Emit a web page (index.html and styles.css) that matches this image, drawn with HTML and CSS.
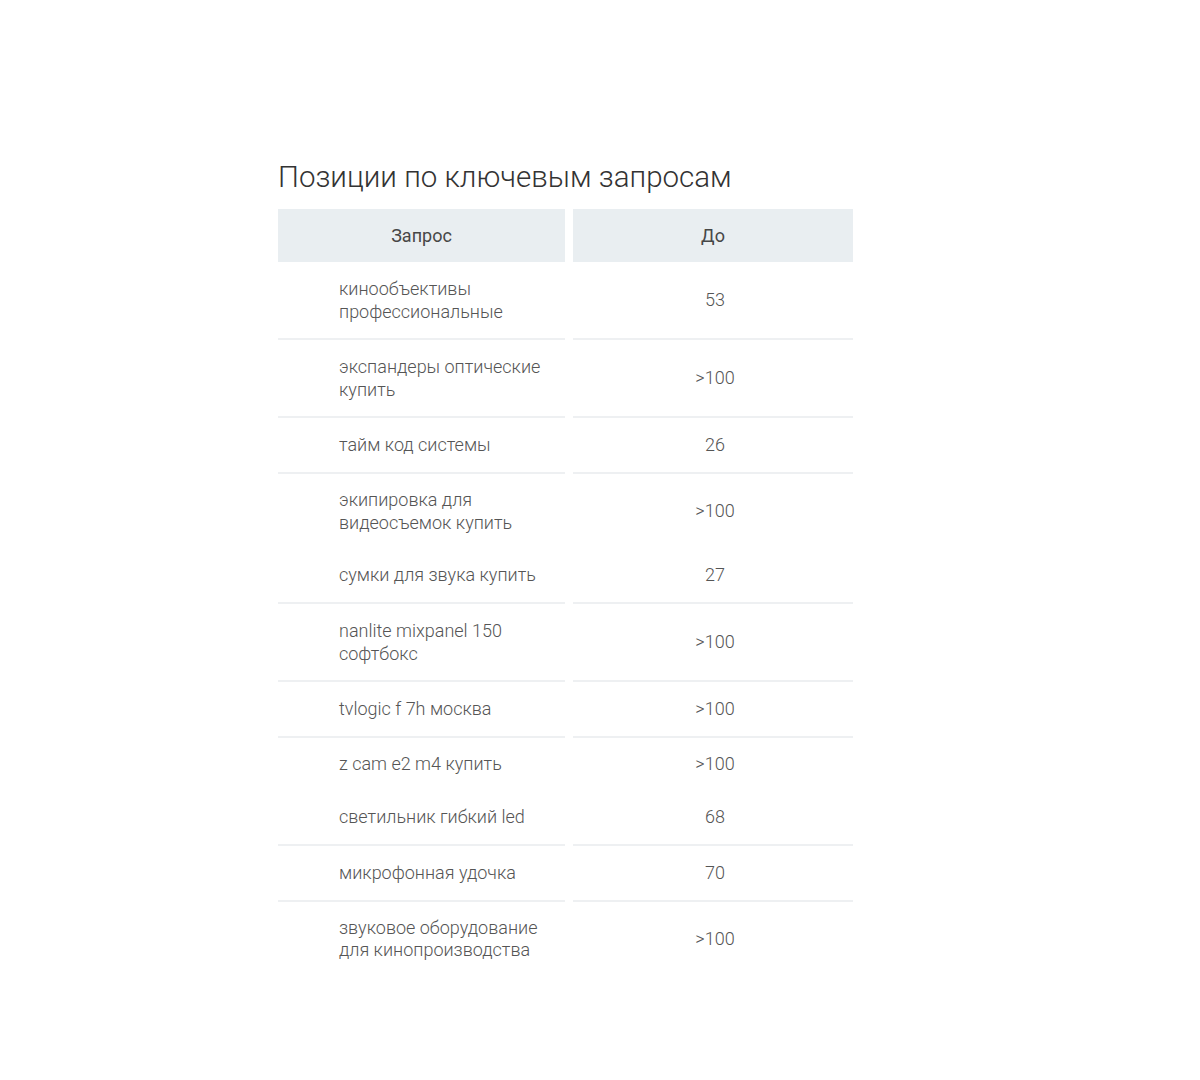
FILE: index.html
```html
<!DOCTYPE html>
<html lang="ru">
<head>
<meta charset="utf-8">
<link rel="stylesheet" href="styles.css">
</head>
<body>
<section class="positions">
  <h2 class="title">Позиции по ключевым запросам</h2>
  <div class="table">
    <div class="th">Запрос</div><div class="th">До</div>

    <div class="q b">кинообъективы<br>профессиональные</div><div class="v b">53</div>
    <div class="q b">экспандеры оптические<br>купить</div><div class="v b">&gt;100</div>
    <div class="q b">тайм код системы</div><div class="v b">26</div>
    <div class="q nb">экипировка для<br>видеосъемок купить</div><div class="v nb">&gt;100</div>
    <div class="q b">сумки для звука купить</div><div class="v b">27</div>
    <div class="q b">nanlite mixpanel 150<br>софтбокс</div><div class="v b">&gt;100</div>
    <div class="q b">tvlogic f 7h москва</div><div class="v b">&gt;100</div>
    <div class="q nb">z cam e2 m4 купить</div><div class="v nb">&gt;100</div>
    <div class="q b">светильник гибкий led</div><div class="v b">68</div>
    <div class="q b">микрофонная удочка</div><div class="v b">70</div>
    <div class="q nb">звуковое оборудование<br>для кинопроизводства</div><div class="v nb">&gt;100</div>
  </div>
</section>
</body>
</html>
```

FILE: styles.css
```css
html, body {
  margin: 0;
  padding: 0;
  background: #ffffff;
}

body {
  font-family: Roboto, "Liberation Sans", Arial, sans-serif;
}

.positions {
  padding: 159px 0 0 278px;
  width: 575px;
}

.title {
  margin: 0 0 14px 0;
  font-size: 29.5px;
  font-weight: 300;
  color: #333333;
  line-height: 36px;
}

.table {
  display: grid;
  grid-template-columns: 287px 280px;
  column-gap: 8px;
}

.th {
  background: #e9eef1;
  height: 53px;
  display: flex;
  align-items: center;
  justify-content: center;
  font-size: 18px;
  color: #474747;
}

.q, .v {
  box-sizing: border-box;
  font-size: 18px;
  font-weight: 300;
  line-height: 22.5px;
  color: #555555;
  padding: 16px 0 15px;
  display: flex;
  align-items: center;
}

.q {
  padding-left: 61px;
}

.v {
  justify-content: center;
  padding-left: 4px;
}

.b {
  min-height: 56px;
  border-bottom: 2px solid #eef0f2;
}

.nb {
  padding-top: 15px;
  padding-bottom: 14px;
}
```
